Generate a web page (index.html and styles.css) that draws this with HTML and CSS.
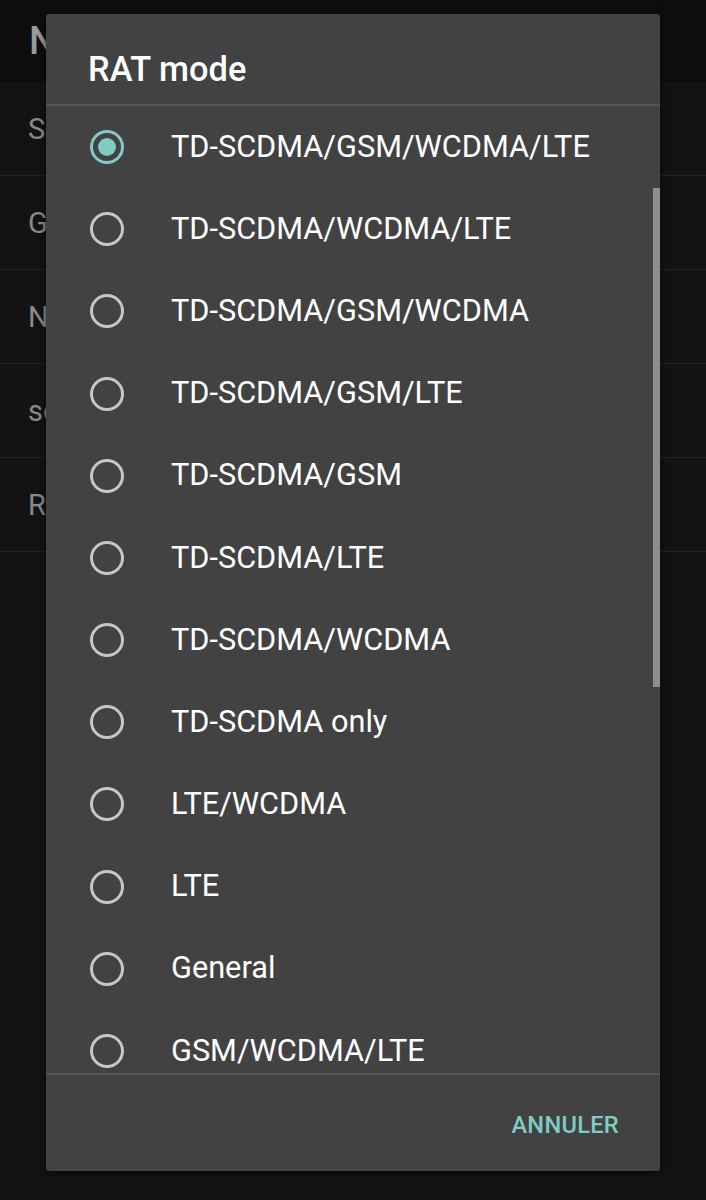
FILE: index.html
```html
<!DOCTYPE html>
<html>
<head>
<meta charset="utf-8">
<link rel="stylesheet" href="styles.css">
</head>
<body>
<div class="screen">
  <div class="appbar"><span class="appbar-title">N</span></div>
  <ul class="bg-list">
    <li class="bg-row">SIM</li>
    <li class="bg-row">GSM</li>
    <li class="bg-row">Network</li>
    <li class="bg-row">scan</li>
    <li class="bg-row">RAT mode</li>
  </ul>
  <div class="dialog">
    <div class="dialog-title">RAT mode</div>
    <div class="dialog-body">
      <ul class="options">
        <li class="option"><span class="radio checked"></span><span class="label">TD-SCDMA/GSM/WCDMA/LTE</span></li>
        <li class="option"><span class="radio"></span><span class="label">TD-SCDMA/WCDMA/LTE</span></li>
        <li class="option"><span class="radio"></span><span class="label">TD-SCDMA/GSM/WCDMA</span></li>
        <li class="option"><span class="radio"></span><span class="label">TD-SCDMA/GSM/LTE</span></li>
        <li class="option"><span class="radio"></span><span class="label">TD-SCDMA/GSM</span></li>
        <li class="option"><span class="radio"></span><span class="label">TD-SCDMA/LTE</span></li>
        <li class="option"><span class="radio"></span><span class="label">TD-SCDMA/WCDMA</span></li>
        <li class="option"><span class="radio"></span><span class="label">TD-SCDMA only</span></li>
        <li class="option"><span class="radio"></span><span class="label">LTE/WCDMA</span></li>
        <li class="option"><span class="radio"></span><span class="label">LTE</span></li>
        <li class="option"><span class="radio"></span><span class="label">General</span></li>
        <li class="option"><span class="radio"></span><span class="label">GSM/WCDMA/LTE</span></li>
      </ul>
      <div class="scrollbar"></div>
    </div>
    <div class="dialog-actions"><span class="btn">ANNULER</span></div>
  </div>
</div>
</body>
</html>
```
FILE: styles.css
```css
* { box-sizing: border-box; }
html, body { margin: 0; padding: 0; }
body {
  width: 706px;
  height: 1200px;
  overflow: hidden;
  background: #131313;
  font-family: Roboto, "Liberation Sans", sans-serif;
}
.screen {
  position: relative;
  width: 706px;
  height: 1200px;
  background: #131313;
}
.appbar {
  height: 82px;
  background: #0e0e0e;
  padding-left: 29px;
  display: flex;
  align-items: center;
}
.appbar-title {
  color: #9a9a9a;
  font-size: 38px;
  font-weight: 500;
}
.bg-list {
  list-style: none;
  margin: 0;
  padding: 0;
}
.bg-row {
  height: 94px;
  border-bottom: 1px solid #242424;
  display: flex;
  align-items: center;
  padding-left: 28px;
  color: #8a8a8a;
  font-size: 29px;
}
.dialog {
  position: absolute;
  left: 46px;
  top: 14px;
  width: 614px;
  height: 1157px;
  background: #424242;
  border-radius: 3px;
  box-shadow: 0 2px 8px rgba(0,0,0,0.6);
  display: flex;
  flex-direction: column;
  overflow: hidden;
}
.dialog-title {
  height: 92px;
  flex: none;
  padding-left: 42px;
  padding-top: 35px;
  color: #ffffff;
  font-size: 34.4px;
  font-weight: 500;
  line-height: 40px;
  border-bottom: 2px solid #555555;
}
.dialog-body {
  position: relative;
  flex: 1;
  overflow: hidden;
  border-bottom: 2px solid #555555;
}
.options {
  list-style: none;
  margin: 0;
  padding: 0;
}
.option {
  height: 82.18px;
  display: flex;
  align-items: center;
  padding-left: 44px;
}
.radio {
  flex: none;
  width: 34px;
  height: 34px;
  border: 3px solid #c7c7c7;
  border-radius: 50%;
  margin-right: 47px;
  position: relative;
}
.radio.checked {
  border-color: #80cbc4;
}
.radio.checked::after {
  content: "";
  position: absolute;
  left: 5px;
  top: 5px;
  width: 18px;
  height: 18px;
  border-radius: 50%;
  background: #80cbc4;
}
.label {
  color: #ffffff;
  font-size: 30.7px;
  line-height: 1;
}
.scrollbar {
  position: absolute;
  right: 0;
  top: 82px;
  width: 7px;
  height: 499px;
  background: #8e8e8e;
}
.dialog-actions {
  flex: none;
  height: 96px;
  display: flex;
  align-items: center;
  justify-content: flex-end;
  padding-right: 41px;
  padding-top: 4px;
}
.btn {
  color: #80cbc4;
  font-size: 23.6px;
  font-weight: 500;
  letter-spacing: 0.3px;
}
```
